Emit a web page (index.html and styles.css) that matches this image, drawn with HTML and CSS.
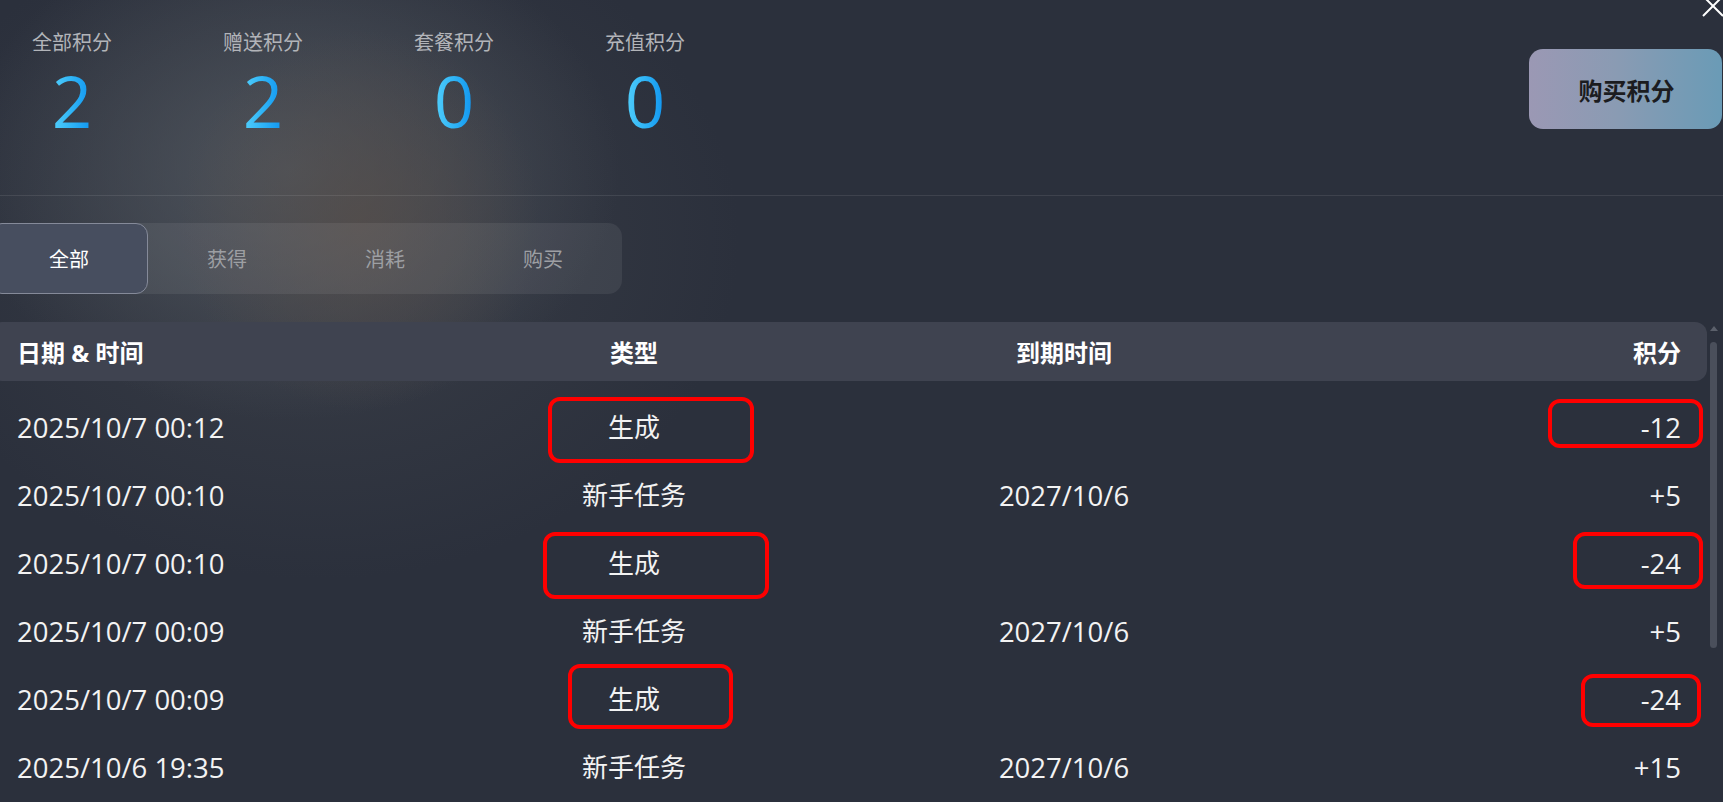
FILE: index.html
```html
<!DOCTYPE html>
<html lang="zh-CN">
<head>
<meta charset="utf-8">
<title>积分明细</title>
<link rel="stylesheet" href="styles.css">
</head>
<body>
<div class="modal">
  <button class="close" aria-label="关闭">
    <svg width="24" height="24" viewBox="0 0 24 24"><path d="M2 2 L22 22 M22 2 L2 22" stroke="#ffffff" stroke-width="2" fill="none"/></svg>
  </button>

  <section class="summary">
    <div class="stats">
      <div class="stat"><div class="stat-label">全部积分</div><div class="stat-value"><span>2</span></div></div>
      <div class="stat"><div class="stat-label">赠送积分</div><div class="stat-value"><span>2</span></div></div>
      <div class="stat"><div class="stat-label">套餐积分</div><div class="stat-value"><span>0</span></div></div>
      <div class="stat"><div class="stat-label">充值积分</div><div class="stat-value"><span>0</span></div></div>
    </div>
    <button class="buy">购买积分</button>
  </section>

  <nav class="tabs">
    <span class="tab active">全部</span>
    <span class="tab">获得</span>
    <span class="tab">消耗</span>
    <span class="tab">购买</span>
  </nav>

  <div class="table-wrap">
    <div class="table">
      <div class="row thead">
        <span class="c-date">日期 &amp; 时间</span>
        <span class="c-type">类型</span>
        <span class="c-exp">到期时间</span>
        <span class="c-pts">积分</span>
      </div>
      <div class="tbody">
        <div class="row">
          <span class="c-date">2025/10/7 00:12</span>
          <span class="c-type"><span class="val mark mt1">生成</span></span>
          <span class="c-exp"></span>
          <span class="c-pts"><span class="val mark mp1">-12</span></span>
        </div>
        <div class="row">
          <span class="c-date">2025/10/7 00:10</span>
          <span class="c-type"><span class="val">新手任务</span></span>
          <span class="c-exp">2027/10/6</span>
          <span class="c-pts"><span class="val">+5</span></span>
        </div>
        <div class="row">
          <span class="c-date">2025/10/7 00:10</span>
          <span class="c-type"><span class="val mark mt2">生成</span></span>
          <span class="c-exp"></span>
          <span class="c-pts"><span class="val mark mp2">-24</span></span>
        </div>
        <div class="row">
          <span class="c-date">2025/10/7 00:09</span>
          <span class="c-type"><span class="val">新手任务</span></span>
          <span class="c-exp">2027/10/6</span>
          <span class="c-pts"><span class="val">+5</span></span>
        </div>
        <div class="row">
          <span class="c-date">2025/10/7 00:09</span>
          <span class="c-type"><span class="val mark mt3">生成</span></span>
          <span class="c-exp"></span>
          <span class="c-pts"><span class="val mark mp3">-24</span></span>
        </div>
        <div class="row">
          <span class="c-date">2025/10/6 19:35</span>
          <span class="c-type"><span class="val">新手任务</span></span>
          <span class="c-exp">2027/10/6</span>
          <span class="c-pts"><span class="val">+15</span></span>
        </div>
      </div>
    </div>
    <div class="scrollbar">
      <span class="sb-arrow"></span>
      <span class="sb-thumb"></span>
    </div>
  </div>
</div>
</body>
</html>
```

FILE: styles.css
```css
* { box-sizing: border-box; }

html, body {
  margin: 0;
  padding: 0;
  width: 1723px;
  height: 802px;
  overflow: hidden;
}

body {
  font-family: "Open Sans", "Noto Sans CJK SC", sans-serif;
  color: #f3f3f3;
  background-color: #2b303c;
  background-image:
    radial-gradient(ellipse 180px 190px at 360px 220px, rgba(86, 77, 72, 0.7), rgba(86, 77, 72, 0) 100%),
    radial-gradient(ellipse 330px 250px at 290px 170px, rgba(82, 88, 96, 0.85), rgba(82, 88, 96, 0) 100%),
    radial-gradient(ellipse 420px 340px at 320px 240px, rgba(64, 68, 76, 0.7), rgba(64, 68, 76, 0) 100%);
}

.modal {
  position: relative;
  width: 1723px;
  height: 802px;
}

.close {
  position: absolute;
  top: -6px;
  left: 1701px;
  width: 24px;
  height: 24px;
  padding: 0;
  border: 0;
  background: none;
  display: block;
}
.close svg { display: block; }

/* ---------- summary ---------- */
.summary {
  height: 196px;
  border-bottom: 1px solid rgba(255, 255, 255, 0.09);
  display: flex;
  justify-content: space-between;
  align-items: flex-start;
}

.stats {
  display: flex;
  gap: 95px;
  padding: 33px 0 0 24px;
}

.stat {
  width: 96px;
  text-align: center;
}

.stat-label {
  font-size: 20px;
  line-height: 20px;
  color: #b2b4b9;
  white-space: nowrap;
}

.stat-value {
  margin-top: 12px;
  font-size: 71px;
  line-height: 71px;
  font-weight: 400;
}
.stat-value span {
  display: inline-block;
  background: linear-gradient(90deg, #52cffb 0%, #2fb4f6 50%, #0f94f0 100%);
  -webkit-background-clip: text;
  background-clip: text;
  color: transparent;
}

.buy {
  margin: 49px 1px 0 0;
  width: 193px;
  height: 80px;
  border: 0;
  border-radius: 14px;
  background: linear-gradient(90deg, #9b98b4 0%, #8a9bb3 45%, #6a9bb6 100%);
  color: #1b1c20;
  font-family: "Noto Sans CJK SC", sans-serif;
  font-size: 24px;
  font-weight: 700;
  padding: 0 0 0 2px;
}

/* ---------- tabs ---------- */
.tabs {
  margin: 27px 0 0 -10px;
  width: 632px;
  height: 71px;
  display: grid;
  grid-template-columns: repeat(4, 158px);
  border-radius: 14px;
  background: rgba(255, 255, 255, 0.07);
}

.tab {
  display: flex;
  align-items: center;
  justify-content: center;
  font-size: 20px;
  color: #9d9fa3;
  border-radius: 12px;
}

.tab.active {
  color: #ffffff;
  background: #474e5f;
  border: 1px solid #858a99;
}

/* ---------- table ---------- */
.table-wrap {
  margin-top: 28px;
  display: flex;
  align-items: flex-start;
}

.table {
  margin-left: -10px;
  width: 1717px;
}

.row {
  display: grid;
  grid-template-columns: 400px 434px 426px 1fr;
  align-items: center;
  padding: 0 26px 0 27px;
  height: 68px;
  font-size: 27.5px;
}

.thead {
  height: 59px;
  background: #3f4350;
  border-radius: 12px;
  font-size: 24px;
  font-weight: 700;
  color: #ffffff;
}

.tbody {
  padding-top: 12px;
}

.c-date { text-align: left; white-space: nowrap; }
.c-type { text-align: center; }
.c-exp { text-align: center; }
.c-pts { text-align: right; }

.tbody .c-type { font-size: 26px; }

.val {
  display: inline-block;
  line-height: 26px;
}

.mark { position: relative; }
.mark::after {
  content: "";
  position: absolute;
  border: 4px solid #ff0000;
  border-radius: 12px;
}
.mt1::after { left: -60px; right: -94px; top: -17px; bottom: -23px; }
.mt2::after { left: -65px; right: -109px; top: -18px; bottom: -23px; }
.mt3::after { left: -40px; right: -73px; top: -22px; bottom: -17px; }
.mp1::after { left: -93px; right: -22px; top: -16px; bottom: -7px; }
.mp2::after { left: -68px; right: -22px; top: -19px; bottom: -12px; }
.mp3::after { left: -60px; right: -20px; top: -13px; bottom: -14px; }

/* ---------- scrollbar ---------- */
.scrollbar {
  width: 16px;
  display: flex;
  flex-direction: column;
  align-items: center;
  padding-right: 3px;
}

.sb-arrow {
  margin-top: 4px;
  width: 0;
  height: 0;
  border-left: 4px solid transparent;
  border-right: 4px solid transparent;
  border-bottom: 5px solid #5b606b;
}

.sb-thumb {
  margin-top: 11px;
  width: 7px;
  height: 306px;
  border-radius: 4px;
  background: #4a4f5b;
}
```
